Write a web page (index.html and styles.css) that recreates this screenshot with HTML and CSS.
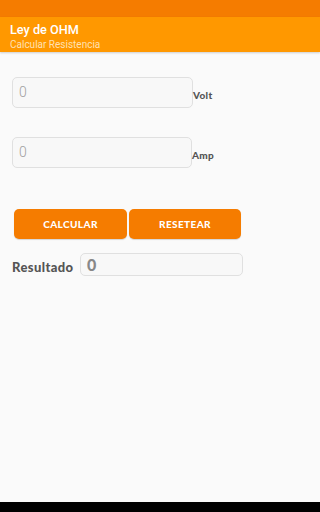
FILE: index.html
```html
<!DOCTYPE html>
<html lang="es">
<head>
<meta charset="utf-8">
<title>Ley de OHM</title>
<link rel="stylesheet" href="styles.css">
</head>
<body>
<div class="screen">
  <div class="statusbar"></div>
  <header class="toolbar">
    <div class="title">Ley de OHM</div>
    <div class="subtitle">Calcular Resistencia</div>
  </header>
  <main class="content">
    <div class="field-row volt-row">
      <div class="field">0</div>
      <span class="unit">Volt</span>
    </div>
    <div class="field-row amp-row">
      <div class="field field-amp">0</div>
      <span class="unit">Amp</span>
    </div>
    <div class="buttons">
      <button class="btn btn-calc">CALCULAR</button>
      <button class="btn btn-reset">RESETEAR</button>
    </div>
    <div class="result-row">
      <span class="result-label">Resultado</span>
      <div class="result-field">0</div>
    </div>
  </main>
  <div class="navbar"></div>
</div>
</body>
</html>
```

FILE: styles.css
```css
* { box-sizing: border-box; }
html, body { margin: 0; padding: 0; }
body {
  background: #fafafa;
  font-family: Roboto, "Noto Sans", sans-serif;
}
.screen {
  width: 100%;
  min-width: 256px;
  height: 512px;
  display: flex;
  flex-direction: column;
}
.statusbar {
  height: 17px;
  background: #f57c00;
}
.toolbar {
  height: 35px;
  background: #ff9800;
  padding: 5px 0 0 10px;
  box-shadow: 0 1px 2px rgba(0,0,0,0.18);
  position: relative;
}
.title {
  color: #ffffff;
  font-weight: 500;
  font-size: 12.7px;
  line-height: 15px;
}
.subtitle {
  color: #ffe0b2;
  font-size: 10px;
  line-height: 12px;
  margin-top: 2px;
}
.content {
  flex: 1;
  padding: 0 0 0 12px;
}
.field-row {
  display: flex;
  align-items: center;
}
.volt-row { margin-top: 25px; }
.amp-row { margin-top: 29px; }
.field {
  width: 181px;
  height: 31px;
  border: 1px solid #e0e0e0;
  border-radius: 5px;
  background: #f8f8f8;
  color: #a0a0a0;
  font-family: Roboto, sans-serif;
  font-weight: 300;
  font-size: 14px;
  line-height: 29px;
  padding-left: 6px;
}
.field-amp { width: 180px; }
.unit {
  font-family: Lato, sans-serif;
  font-weight: 900;
  font-size: 10px;
  color: #555555;
  margin-top: 5px;
  letter-spacing: 0.3px;
}
.buttons {
  display: flex;
  gap: 2px;
  margin-top: 41px;
  padding-left: 2px;
}
.btn {
  height: 30px;
  border: none;
  border-radius: 5px;
  background: #f57c00;
  color: #ffffff;
  font-family: Lato, sans-serif;
  font-weight: 900;
  font-size: 10px;
  letter-spacing: 0.4px;
  box-shadow: 0 1px 1px rgba(0,0,0,0.15);
  padding: 0;
}
.btn-calc { width: 113px; }
.btn-reset { width: 112px; }
.result-row {
  display: flex;
  align-items: center;
  margin-top: 14px;
}
.result-label {
  font-family: Lato, sans-serif;
  font-weight: 900;
  font-size: 13px;
  letter-spacing: 0.4px;
  color: #555555;
  width: 68px;
  padding-top: 4px;
  white-space: nowrap;
}
.result-field {
  width: 163px;
  height: 23px;
  border: 1px solid #e0e0e0;
  border-radius: 5px;
  background: #f8f8f8;
  color: #888888;
  font-family: Lato, sans-serif;
  font-weight: 900;
  font-size: 16px;
  line-height: 21px;
  padding-left: 6px;
}
.navbar {
  height: 10px;
  background: #000000;
}
```
